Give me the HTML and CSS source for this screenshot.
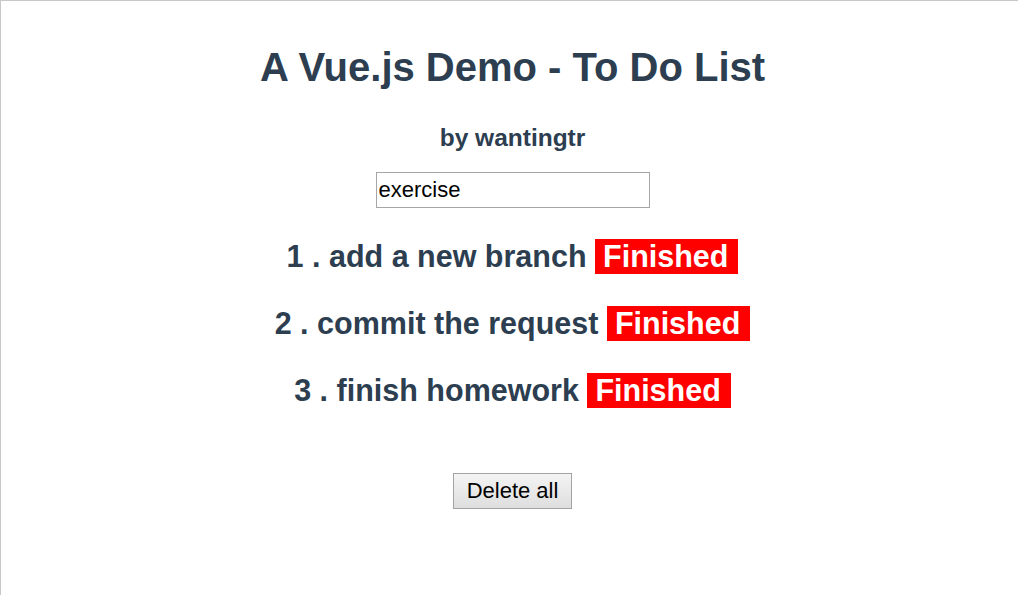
FILE: index.html
```html
<!DOCTYPE html>
<html>
<head>
<meta charset="utf-8">
<title>A Vue.js Demo - To Do List</title>
<link rel="stylesheet" href="styles.css">
</head>
<body>
<div class="frame">
  <div class="app">
    <h1 class="title">A Vue.js Demo - To Do List</h1>
    <h3 class="author">by wantingtr</h3>
    <input class="new-item" type="text" value="exercise">
    <ul class="list">
      <li class="item">1 . add a new branch <span class="badge">Finished</span></li>
      <li class="item">2 . commit the request <span class="badge">Finished</span></li>
      <li class="item">3 . finish homework <span class="badge">Finished</span></li>
    </ul>
    <button class="delete-btn" type="button">Delete all</button>
  </div>
</div>
</body>
</html>
```

FILE: styles.css
```css
html, body {
  margin: 0;
  padding: 0;
  background: #ffffff;
}

.frame {
  border-top: 1px solid #c8c8c8;
  border-left: 1px solid #c8c8c8;
  min-height: 595px;
  box-sizing: border-box;
}

.app {
  display: flex;
  flex-direction: column;
  align-items: center;
  padding-left: 6px;
  color: #2c3e50;
  font-family: "Liberation Sans", Arial, sans-serif;
  text-align: center;
}

.title {
  margin: 43px 0 0;
  font-size: 40px;
  line-height: 46px;
  font-weight: bold;
}

.author {
  margin: 34px 0 0;
  font-size: 24.5px;
  line-height: 28px;
  font-weight: bold;
}

.new-item {
  margin: 20px 0 0;
  width: 274px;
  height: 36px;
  box-sizing: border-box;
  padding: 1px 2px;
  border: 1px solid #a6a6a6;
  border-radius: 0;
  font-family: "Liberation Sans", Arial, sans-serif;
  font-size: 22px;
  color: #000000;
  background: #ffffff;
  outline: none;
}

.list {
  list-style: none;
  margin: 31px 0 0;
  padding: 0;
  display: flex;
  flex-direction: column;
  align-items: center;
  gap: 32px;
}

.item {
  font-size: 30.5px;
  line-height: 35px;
  height: 35px;
  font-weight: bold;
  white-space: nowrap;
}

.badge {
  display: inline-block;
  background: #ff0000;
  color: #ffffff;
  padding: 0 10px 0 8px;
  line-height: 35px;
}

.delete-btn {
  margin: 65px 0 0;
  height: 36px;
  box-sizing: border-box;
  padding: 0 13px;
  font-family: "Liberation Sans", Arial, sans-serif;
  font-size: 22px;
  color: #000000;
  border: 1px solid #a3a3a3;
  border-radius: 0;
  background: linear-gradient(#f4f4f4, #dedede);
}
```
